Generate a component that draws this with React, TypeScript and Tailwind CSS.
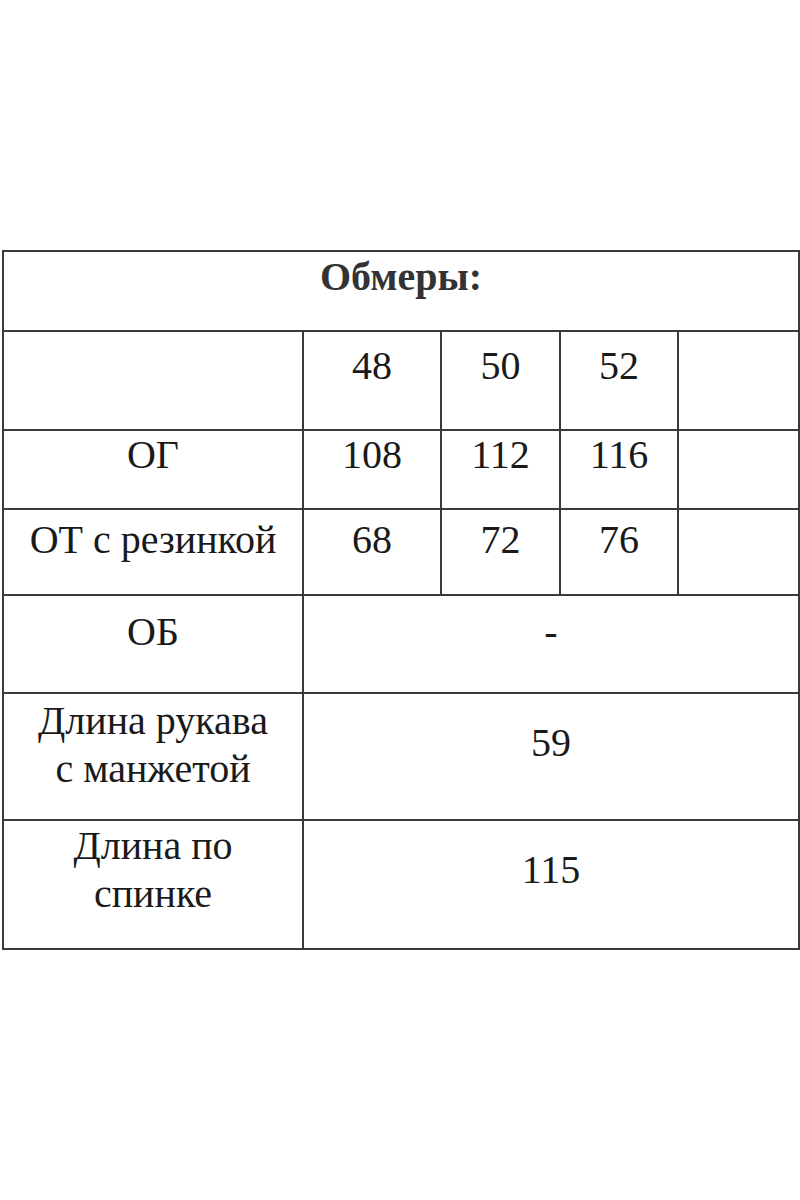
const line = "border-[#3a3a3a]";

const Cell = ({
  children,
  className = "",
}: {
  children?: React.ReactNode;
  className?: string;
}) => (
  <div className={`border-r-2 border-b-2 ${line} flex flex-col items-center text-center ${className}`}>
    {children}
  </div>
);

export default function App() {
  return (
    <div className="w-[800px] h-[1200px] bg-white pt-[250px] text-[#1a1a1a] [font-family:'Liberation_Serif',serif]">
      <div
        className={`ml-[2px] grid grid-cols-[300px_138px_119px_118px_121px] border-t-2 border-l-2 ${line} text-[40px] leading-[48px]`}
      >
        <Cell className="col-span-5 h-[80px] pt-[1px]">
          <span className="font-bold text-[#333]">Обмеры:</span>
        </Cell>

        <Cell className="h-[99px]" />
        <Cell className="h-[99px] pt-[10px]">48</Cell>
        <Cell className="h-[99px] pt-[10px]">50</Cell>
        <Cell className="h-[99px] pt-[10px]">52</Cell>
        <Cell className="h-[99px]" />

        <Cell className="h-[79px] pt-[0px]">ОГ</Cell>
        <Cell className="h-[79px] pt-[0px]">108</Cell>
        <Cell className="h-[79px] pt-[0px]">112</Cell>
        <Cell className="h-[79px] pt-[0px]">116</Cell>
        <Cell className="h-[79px]" />

        <Cell className="h-[86px] pt-[6px]">ОТ с резинкой</Cell>
        <Cell className="h-[86px] pt-[6px]">68</Cell>
        <Cell className="h-[86px] pt-[6px]">72</Cell>
        <Cell className="h-[86px] pt-[6px]">76</Cell>
        <Cell className="h-[86px]" />

        <Cell className="h-[98px] pt-[12px]">ОБ</Cell>
        <Cell className="col-span-4 h-[98px] pt-[12px]">-</Cell>

        <Cell className="h-[127px] pt-[3px]">
          <span>Длина рукава</span>
          <span>с манжетой</span>
        </Cell>
        <Cell className="col-span-4 h-[127px] pt-[25px]">59</Cell>

        <Cell className="h-[129px] pt-[1px]">
          <span>Длина по</span>
          <span>спинке</span>
        </Cell>
        <Cell className="col-span-4 h-[129px] pt-[25px]">115</Cell>
      </div>
    </div>
  );
}
